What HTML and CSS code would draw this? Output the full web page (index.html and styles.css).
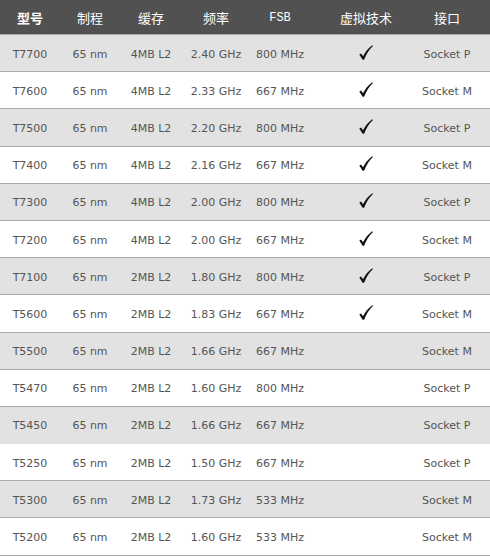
FILE: index.html
```html
<!DOCTYPE html>
<html lang="zh">
<head>
<meta charset="utf-8">
<title>CPU 型号</title>
<link rel="stylesheet" href="styles.css">
</head>
<body>
<table class="spec">
  <colgroup>
    <col class="c1"><col class="c2"><col class="c3"><col class="c4"><col class="c5"><col class="c6"><col class="c7">
  </colgroup>
  <thead>
    <tr>
      <th class="strong">型号</th>
      <th>制程</th>
      <th>缓存</th>
      <th>频率</th>
      <th class="latin">FSB</th>
      <th>虚拟技术</th>
      <th class="last">接口</th>
    </tr>
  </thead>
  <tbody>
    <tr class="alt"><td>T7700</td><td>65 nm</td><td>4MB L2</td><td>2.40 GHz</td><td>800 MHz</td><td><svg class="check" viewBox="0 0 14 15" width="14" height="15"><path d="M0.3 9.6 L2.1 8.4 L4 11.3 C6.2 7 9 3.2 13.2 0.2 L14 0.9 C10.2 4.3 7.3 9 5.1 14.8 L3.6 14.8 Z"/></svg></td><td class="last">Socket P</td></tr>
    <tr><td>T7600</td><td>65 nm</td><td>4MB L2</td><td>2.33 GHz</td><td>667 MHz</td><td><svg class="check" viewBox="0 0 14 15" width="14" height="15"><path d="M0.3 9.6 L2.1 8.4 L4 11.3 C6.2 7 9 3.2 13.2 0.2 L14 0.9 C10.2 4.3 7.3 9 5.1 14.8 L3.6 14.8 Z"/></svg></td><td class="last">Socket M</td></tr>
    <tr class="alt"><td>T7500</td><td>65 nm</td><td>4MB L2</td><td>2.20 GHz</td><td>800 MHz</td><td><svg class="check" viewBox="0 0 14 15" width="14" height="15"><path d="M0.3 9.6 L2.1 8.4 L4 11.3 C6.2 7 9 3.2 13.2 0.2 L14 0.9 C10.2 4.3 7.3 9 5.1 14.8 L3.6 14.8 Z"/></svg></td><td class="last">Socket P</td></tr>
    <tr><td>T7400</td><td>65 nm</td><td>4MB L2</td><td>2.16 GHz</td><td>667 MHz</td><td><svg class="check" viewBox="0 0 14 15" width="14" height="15"><path d="M0.3 9.6 L2.1 8.4 L4 11.3 C6.2 7 9 3.2 13.2 0.2 L14 0.9 C10.2 4.3 7.3 9 5.1 14.8 L3.6 14.8 Z"/></svg></td><td class="last">Socket M</td></tr>
    <tr class="alt"><td>T7300</td><td>65 nm</td><td>4MB L2</td><td>2.00 GHz</td><td>800 MHz</td><td><svg class="check" viewBox="0 0 14 15" width="14" height="15"><path d="M0.3 9.6 L2.1 8.4 L4 11.3 C6.2 7 9 3.2 13.2 0.2 L14 0.9 C10.2 4.3 7.3 9 5.1 14.8 L3.6 14.8 Z"/></svg></td><td class="last">Socket P</td></tr>
    <tr><td>T7200</td><td>65 nm</td><td>4MB L2</td><td>2.00 GHz</td><td>667 MHz</td><td><svg class="check" viewBox="0 0 14 15" width="14" height="15"><path d="M0.3 9.6 L2.1 8.4 L4 11.3 C6.2 7 9 3.2 13.2 0.2 L14 0.9 C10.2 4.3 7.3 9 5.1 14.8 L3.6 14.8 Z"/></svg></td><td class="last">Socket M</td></tr>
    <tr class="alt"><td>T7100</td><td>65 nm</td><td>2MB L2</td><td>1.80 GHz</td><td>800 MHz</td><td><svg class="check" viewBox="0 0 14 15" width="14" height="15"><path d="M0.3 9.6 L2.1 8.4 L4 11.3 C6.2 7 9 3.2 13.2 0.2 L14 0.9 C10.2 4.3 7.3 9 5.1 14.8 L3.6 14.8 Z"/></svg></td><td class="last">Socket P</td></tr>
    <tr><td>T5600</td><td>65 nm</td><td>2MB L2</td><td>1.83 GHz</td><td>667 MHz</td><td><svg class="check" viewBox="0 0 14 15" width="14" height="15"><path d="M0.3 9.6 L2.1 8.4 L4 11.3 C6.2 7 9 3.2 13.2 0.2 L14 0.9 C10.2 4.3 7.3 9 5.1 14.8 L3.6 14.8 Z"/></svg></td><td class="last">Socket M</td></tr>
    <tr class="alt"><td>T5500</td><td>65 nm</td><td>2MB L2</td><td>1.66 GHz</td><td>667 MHz</td><td></td><td class="last">Socket M</td></tr>
    <tr><td>T5470</td><td>65 nm</td><td>2MB L2</td><td>1.60 GHz</td><td>800 MHz</td><td></td><td class="last">Socket P</td></tr>
    <tr class="alt noline"><td>T5450</td><td>65 nm</td><td>2MB L2</td><td>1.66 GHz</td><td>667 MHz</td><td></td><td class="last">Socket P</td></tr>
    <tr><td>T5250</td><td>65 nm</td><td>2MB L2</td><td>1.50 GHz</td><td>667 MHz</td><td></td><td class="last">Socket P</td></tr>
    <tr class="alt"><td>T5300</td><td>65 nm</td><td>2MB L2</td><td>1.73 GHz</td><td>533 MHz</td><td></td><td class="last">Socket M</td></tr>
    <tr><td>T5200</td><td>65 nm</td><td>2MB L2</td><td>1.60 GHz</td><td>533 MHz</td><td></td><td class="last">Socket M</td></tr>
  </tbody>
</table>
</body>
</html>
```

FILE: styles.css
```css
html, body {
  margin: 0;
  padding: 0;
  background: #ffffff;
}

.spec {
  width: 490px;
  border-collapse: collapse;
  table-layout: fixed;
  font-family: "DejaVu Sans", Verdana, sans-serif;
  font-size: 11px;
  color: #555555;
}

.c1 { width: 60px; }
.c2 { width: 60px; }
.c3 { width: 62px; }
.c4 { width: 68px; }
.c5 { width: 60px; }
.c6 { width: 112px; }
.c7 { width: 68px; }

.spec th {
  height: 32px;
  padding: 0;
  background: #515151;
  color: #ffffff;
  font-family: "Noto Sans CJK SC", sans-serif;
  font-size: 13px;
  font-weight: normal;
  text-align: center;
  vertical-align: middle;
  border-bottom: 1px solid #a8a8a8;
}

.spec th.strong {
  font-weight: bold;
}

.spec th.latin {
  font-family: "Liberation Mono", monospace;
  font-size: 12px;
  padding-top: 2px;
}

.spec td {
  height: 37.2px;
  padding: 2px 0 0;
  box-sizing: border-box;
  text-align: center;
  vertical-align: middle;
  border-bottom: 1px solid #aaaaaa;
  white-space: nowrap;
}

.spec th.last,
.spec td.last {
  padding-right: 18px;
}

.spec tr.alt td {
  background: #e2e2e2;
}

.spec tr.noline td {
  border-bottom-color: #e2e2e2;
}

.check {
  display: block;
  margin: 0 auto;
  fill: #111111;
  position: relative;
  top: -2px;
}
```
